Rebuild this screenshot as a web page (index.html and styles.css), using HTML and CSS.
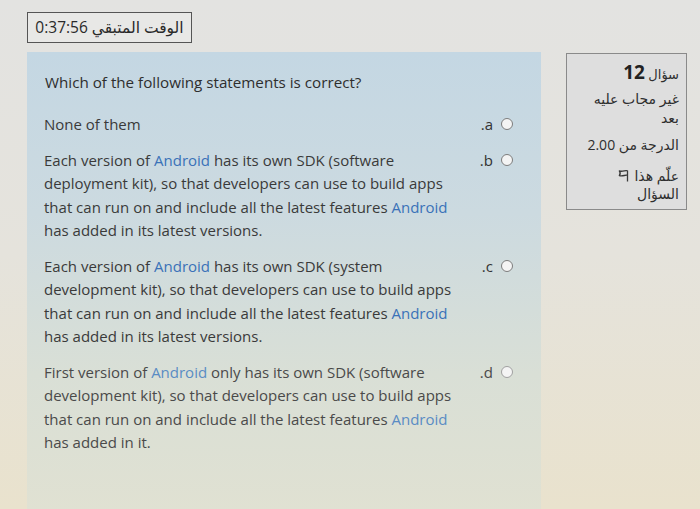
FILE: index.html
```html
<!DOCTYPE html>
<html lang="ar" dir="rtl">

<head>
    <meta charset="UTF-8">
    <title>اختبار</title>
    <link rel="stylesheet" href="styles.css">
</head>

<body>
    <div class="page">
        <!-- المؤقت -->
        <div class="timer-row">
            <div class="timer">الوقت المتبقي <span dir="ltr">0:37:56</span></div>
        </div>

        <div class="quiz-row">
            <!-- معلومات السؤال -->
            <div class="info">
                <h3 class="qno">سؤال <span class="num">12</span></h3>
                <div class="state">غير مجاب عليه بعد</div>
                <div class="grade">الدرجة من 2.00</div>
                <div class="flag">
                    <span class="flag-line">علّم هذا
                        <svg class="flag-icon" width="11" height="13" viewBox="0 0 11 13">
                            <path d="M9.5 12.5V1.5 M9.5 1.8 C7.3 0.6 5 3.2 1.3 1.9 C2.8 4 2.4 5.3 1.3 6.6 C5 7.8 7.3 5.4 9.5 6.4" fill="none" stroke="#3a3a3a" stroke-width="1.3" stroke-linejoin="round" />
                        </svg>
                    </span>
                    <span>السؤال</span>
                </div>
            </div>

            <!-- نص السؤال والخيارات -->
            <div class="content">
                <p class="qtext" dir="ltr">Which of the following statements is correct?</p>
                <div class="answers">
                    <label class="option">
                        <span class="radio"></span>
                        <span class="letter">a.</span>
                        <span class="text" dir="ltr">None of them</span>
                    </label>
                    <label class="option">
                        <span class="radio"></span>
                        <span class="letter">b.</span>
                        <span class="text" dir="ltr">Each version of <span class="kw">Android</span> has its own SDK (software deployment kit), so that developers can use to build apps that can run on and include all the latest features <span class="kw">Android</span> has added in its latest versions.</span>
                    </label>
                    <label class="option">
                        <span class="radio"></span>
                        <span class="letter">c.</span>
                        <span class="text" dir="ltr">Each version of <span class="kw">Android</span> has its own SDK (system development kit), so that developers can use to build apps that can run on and include all the latest features <span class="kw">Android</span> has added in its latest versions.</span>
                    </label>
                    <label class="option faded">
                        <span class="radio"></span>
                        <span class="letter">d.</span>
                        <span class="text" dir="ltr">First version of <span class="kw">Android</span> only has its own SDK (software development kit), so that developers can use to build apps that can run on and include all the latest features <span class="kw">Android</span> has added in it.</span>
                    </label>
                </div>
            </div>
        </div>
    </div>
</body>

</html>
```

FILE: styles.css
```css
html,
body {
    height: 100%;
}

body {
    margin: 0;
    font-family: "Open Sans", "DejaVu Sans", sans-serif;
    color: #3a3a3a;
    background: linear-gradient(to bottom, #e3e3e1 0%, #e5e3dc 50%, #e9e2cd 100%);
    overflow: hidden;
}

.page {
    padding: 12px 13px 0 27px;
}

.timer-row {
    display: flex;
    justify-content: flex-end;
}

.timer {
    width: 163px;
    height: 29px;
    border: 1px solid #555;
    background-color: #e8e8e6;
    font-size: 15.5px;
    line-height: 29px;
    text-align: center;
    color: #2a2a2a;
}

.quiz-row {
    display: flex;
    align-items: flex-start;
    gap: 25px;
    margin-top: 9px;
}

.info {
    width: 106px;
    flex-shrink: 0;
    margin-top: 1px;
    padding: 6px 7px 5px 6px;
    border: 1px solid #8a8a8a;
    background-color: #dedede;
    font-size: 14px;
    line-height: 18.5px;
    color: #2e2e2e;
}

.qno {
    margin: 0 0 4px;
    font-size: 13px;
    font-weight: normal;
    line-height: 24px;
}

.qno .num {
    font-size: 19px;
    font-weight: bold;
    color: #222;
}

.state {
    margin-bottom: 9px;
}

.grade {
    margin-bottom: 12px;
}

.flag span {
    display: block;
}

.flag-icon {
    vertical-align: -1px;
    margin-right: 2px;
}

.content {
    width: 514px;
    height: 460px;
    padding: 19px 0 0;
    background: linear-gradient(to bottom, #c4d7e3 0%, #ccdae0 35%, #d9dfd6 70%, #e0e1d2 100%);
    box-sizing: border-box;
}

.qtext {
    margin: 0;
    padding-left: 18px;
    font-size: 15.2px;
    line-height: 22px;
    text-align: left;
    color: #2e2e2e;
}

.answers {
    margin-top: 20px;
    display: flex;
    flex-direction: column;
    gap: 12px;
}

.option {
    display: flex;
    align-items: flex-start;
    padding-right: 28px;
    font-size: 15px;
    line-height: 23.5px;
}

.radio {
    width: 10px;
    height: 10px;
    margin-top: 5px;
    border: 1.5px solid #7c7c7c;
    border-radius: 50%;
    background-color: #f4f4f4;
    flex-shrink: 0;
}

.letter {
    width: 22px;
    margin-right: 8px;
    text-align: right;
    color: #333;
}

.text {
    margin-right: 9px;
    width: 418px;
    text-align: left;
    color: #3a3a3a;
}

.kw {
    color: #3a72b8;
}

.faded .radio {
    border-color: #a0a0a0;
}

.faded .text,
.faded .letter {
    color: #4a4a4a;
}

.faded .kw {
    color: #5a8cc4;
}
```
